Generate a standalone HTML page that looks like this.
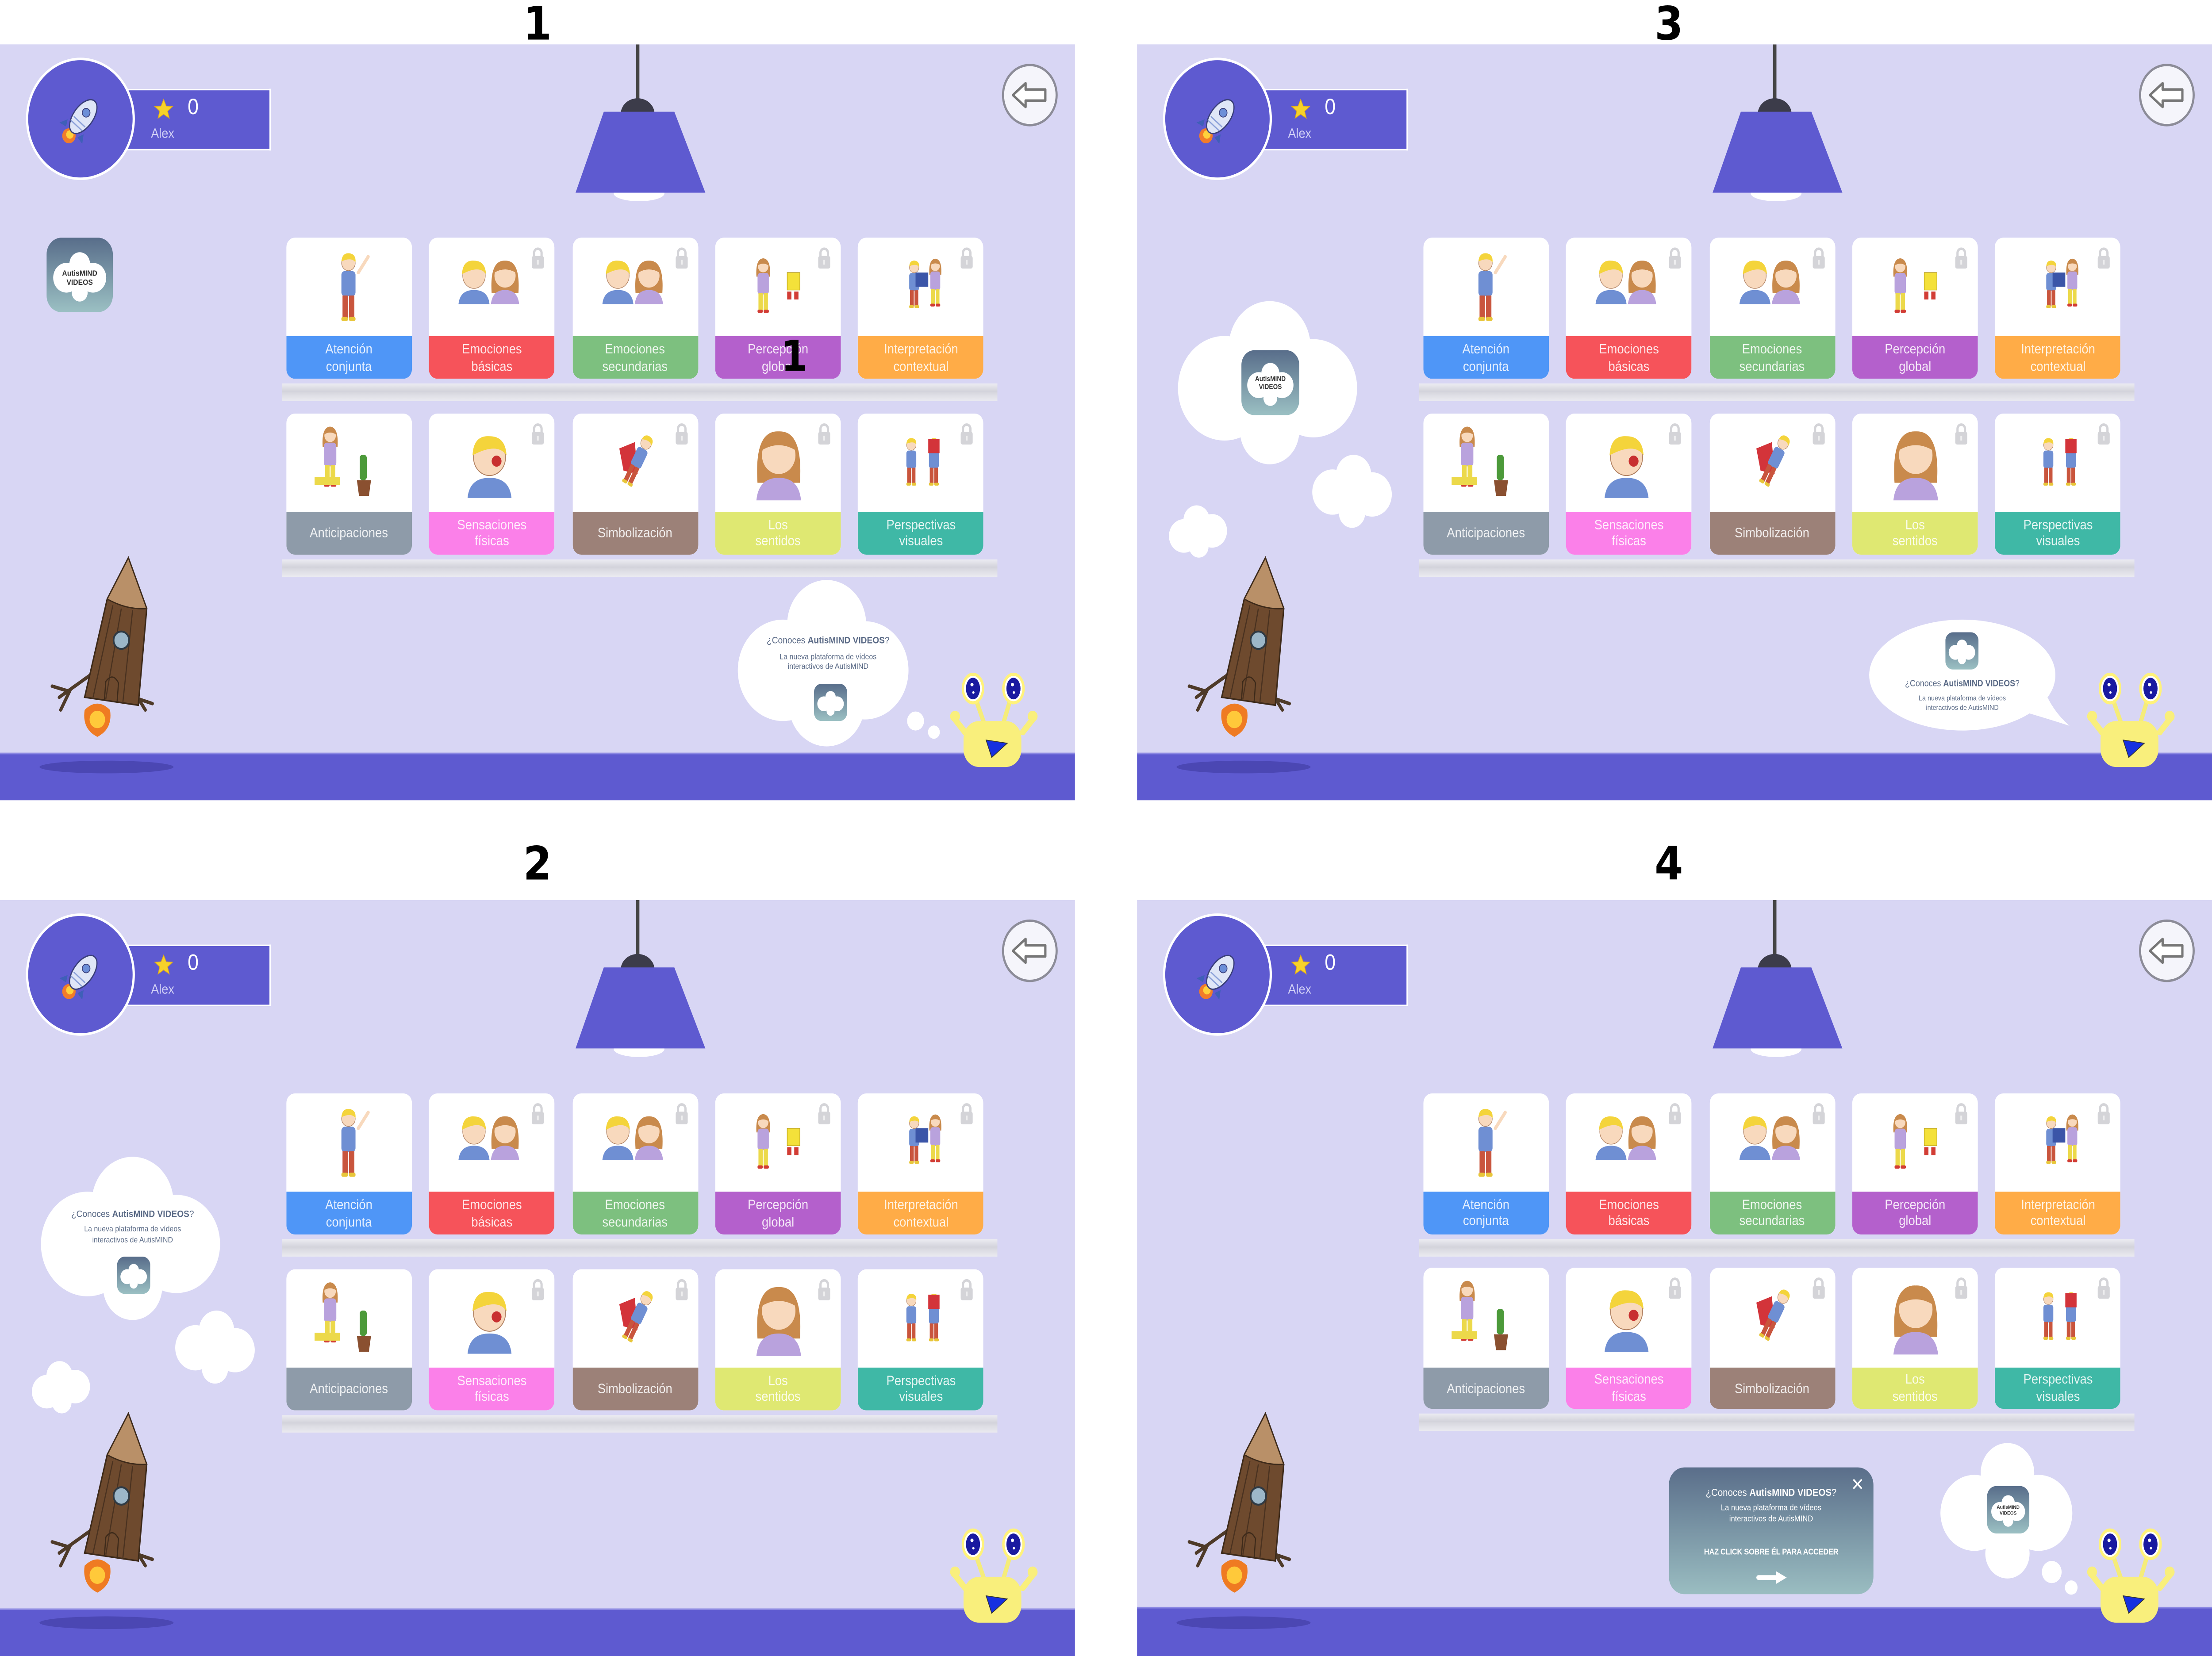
<!DOCTYPE html>
<html><head><meta charset="utf-8">
<style>
html,body{margin:0;padding:0;background:#fff}
body{width:100vw;height:100vh;overflow:hidden;position:relative}
#w{position:absolute;left:0;top:0;width:1568px;height:1045px;transform:scale(3.58291);transform-origin:0 0;font-family:"Liberation Sans",sans-serif}
.ttl{position:absolute;width:100px;text-align:center;font:bold 29px/32px "DejaVu Sans","Liberation Sans",sans-serif;color:#000}
.p{position:absolute;width:762px;height:477px;background:#d8d6f4;overflow:hidden}
.fl{position:absolute;left:0;top:446.5px;width:762px;height:31px;background:#5e5ad0;border-top:1.5px solid #8b88e2}
.sh{position:absolute;left:28px;top:452px;width:95px;height:8px;border-radius:50%;background:#4b47b3}
.bar{position:absolute;left:84px;top:28px;width:108px;height:39px;box-sizing:border-box;background:#5e5ad0;border:1.5px solid #fff;border-left:none}
.bar svg{position:absolute;left:25px;top:5px;width:14px;height:14px}
.n0{position:absolute;left:49px;top:1px;color:#fff;font-size:14px;line-height:18px}
.nm{position:absolute;left:23px;top:22px;color:#d2d1f6;font-size:8.5px;line-height:10px}
.av{position:absolute;left:20px;top:10px;width:74px;height:74px;border-radius:50%;background:#5e5ad0;box-shadow:0 0 0 1.6px #fff}
.ab{position:absolute;overflow:visible}
.c{position:absolute;width:89px;height:89px;background:#fff;border-radius:6px;overflow:hidden}
.c .l{position:absolute;left:0;right:0;bottom:0;height:26.6px;display:flex;align-items:center;justify-content:center;text-align:center;color:rgba(255,255,255,.86);font:8.6px/10.5px "Liberation Sans",sans-serif}
.c .im{position:absolute;left:0;top:0;width:89px;height:62px}
.c .lk{position:absolute;left:72px;top:5px;width:10.5px;height:15px}
.sf{position:absolute;left:200.4px;width:506.6px;height:11px;background:linear-gradient(#ececf2,#d3d3db 45%,#dcdce3 62%,#eaeaf0)}
.t{position:absolute;width:160px;text-align:center;white-space:nowrap;color:#5a6a86}
.pop{position:absolute;left:377px;top:358px;width:145px;height:80.6px;border-radius:11px;background:linear-gradient(#5a6e8a,#9abdc1)}
.pop .t{color:#fff;left:-7.5px}
</style></head><body>
<svg width="0" height="0" style="position:absolute">
<defs>
<linearGradient id="ig" x1="0" y1="0" x2="0" y2="1"><stop offset="0" stop-color="#586d8a"/><stop offset="1" stop-color="#9bc0c3"/></linearGradient>
<symbol id="star" viewBox="0 0 20 20"><polygon points="10,1 12.6,7 19,7.4 14,11.6 15.7,18 10,14.4 4.3,18 6,11.6 1,7.4 7.4,7" fill="#f6d22a" stroke="#e0a81a" stroke-width=".6"/></symbol>
<symbol id="ic" viewBox="0 0 40 40"><rect x="0" y="0" width="40" height="40" rx="9" fill="url(#ig)"/><g fill="#fff"><circle cx="20" cy="14" r="6.2"/><circle cx="12" cy="21.5" r="8"/><circle cx="28" cy="21.5" r="8"/><circle cx="20" cy="29.5" r="4.8"/><rect x="12" y="15" width="16" height="13"/></g></symbol>
<symbol id="lk" viewBox="0 0 10.5 15"><path d="M2.6 7 V4.6 A2.65 2.65 0 0 1 7.9 4.6 V7" stroke="#d4d4d8" stroke-width="1.6" fill="none"/><rect x="1" y="6.5" width="8.5" height="8" rx="1.3" fill="#d4d4d8"/><rect x="4.6" y="9" width="1.3" height="3" fill="#fff" opacity=".6"/></symbol>
<symbol id="kid" viewBox="0 0 20 50"><circle cx="10" cy="9" r="4.8" fill="#f8d9bd" stroke="#b08060" stroke-width=".4"/><path d="M5 8 Q5.5 2.5 10.5 2.8 Q15.5 3.3 15 8.5 Q12 5 5 8Z" fill="#f4d43b"/><rect x="5" y="14" width="10" height="16" rx="2.5" fill="#6f8fd3"/><rect x="5.8" y="29.5" width="3.8" height="14" fill="#c9553d"/><rect x="10.4" y="29.5" width="3.8" height="14" fill="#c9553d"/><rect x="5" y="43" width="4.6" height="2.6" rx="1" fill="#e8c63a"/><rect x="10.4" y="43" width="4.6" height="2.6" rx="1" fill="#e8c63a"/></symbol>
<symbol id="girl" viewBox="0 0 20 50"><path d="M4 17 Q3 3 10 2.5 Q17 3 16 17Z" fill="#c98a4c"/><circle cx="10" cy="9" r="4.6" fill="#f8d9bd"/><path d="M5.5 8 Q7 3.5 10 3.5 Q14 3.5 14.5 8 Q10 5.5 5.5 8Z" fill="#c98a4c"/><rect x="5" y="14" width="10" height="17" rx="2.5" fill="#b9a2dd"/><rect x="5.8" y="30" width="3.8" height="14" fill="#ecd94a"/><rect x="10.4" y="30" width="3.8" height="14" fill="#ecd94a"/><rect x="5" y="43" width="4.6" height="2.6" rx="1" fill="#d23d35"/><rect x="10.4" y="43" width="4.6" height="2.6" rx="1" fill="#d23d35"/></symbol>
<symbol id="bb" viewBox="0 0 24 30"><path d="M1 30 Q2 21 12 21 Q22 21 23 30Z" fill="#6f8fd3"/><circle cx="12" cy="12" r="8" fill="#f8d9bd" stroke="#b08060" stroke-width=".4"/><path d="M3.5 11 Q4 2 12 2.5 Q20 2.5 20.5 11 Q16 5 3.5 11Z" fill="#f4d43b"/></symbol>
<symbol id="bg" viewBox="0 0 24 30"><path d="M2.5 23 Q1 2 12 2.5 Q23 2 21.5 23Z" fill="#c98a4c"/><path d="M2 30 Q3 21 12 21 Q21 21 22 30Z" fill="#b9a2dd"/><circle cx="12" cy="12" r="7.5" fill="#f8d9bd"/><path d="M4.5 10 Q6 3.5 12 3.5 Q18 3.5 19.5 10 Q12 6 4.5 10Z" fill="#c98a4c"/></symbol>
<symbol id="i1" viewBox="0 0 89 62"><use href="#kid" x="34" y="6" width="20" height="52"/><path d="M51 22 L58 12" stroke="#f8d9bd" stroke-width="2.2" stroke-linecap="round"/></symbol>
<symbol id="i2" viewBox="0 0 89 62"><use href="#bb" x="20" y="12" width="24" height="30"/><use href="#bg" x="42" y="12" width="24" height="30"/></symbol>
<symbol id="i4" viewBox="0 0 89 62"><use href="#girl" x="26" y="10" width="16" height="42"/><rect x="51" y="22" width="9" height="11" fill="#f4e13a" stroke="#b9a020" stroke-width=".4"/><rect x="51" y="34" width="3" height="5" fill="#d23d35"/><rect x="56" y="34" width="3" height="5" fill="#d23d35"/></symbol>
<symbol id="i5" viewBox="0 0 89 62"><use href="#kid" x="33" y="12" width="14" height="36"/><use href="#girl" x="48" y="10" width="14" height="38"/><rect x="41" y="22" width="9" height="9" fill="#3b55a8"/></symbol>
<symbol id="i6" viewBox="0 0 89 62"><use href="#girl" x="22" y="6" width="18" height="44"/><rect x="20" y="40" width="18" height="5" fill="#ecd94a"/><rect x="52" y="26" width="5" height="16" rx="2" fill="#4c9a3a"/><path d="M50 42 H60 L58.5 52 H51.5Z" fill="#8a5030"/></symbol>
<symbol id="i7" viewBox="0 0 89 62"><use href="#bb" x="26" y="10" width="34" height="44"/><circle cx="48" cy="30" r="3.5" fill="#c83030"/></symbol>
<symbol id="i8" viewBox="0 0 89 62"><path d="M33 22 L44 18 L46 38 L36 36Z" fill="#d3343a"/><g transform="rotate(28 46 30)"><use href="#kid" x="38" y="10" width="16" height="40"/></g></symbol>
<symbol id="i9" viewBox="0 0 89 62"><use href="#bg" x="26" y="6" width="38" height="50"/></symbol>
<symbol id="i10" viewBox="0 0 89 62"><use href="#kid" x="31" y="12" width="14" height="38"/><use href="#kid" x="47" y="12" width="14" height="38"/><rect x="50" y="16" width="8" height="9" fill="#d3343a"/></symbol>
<symbol id="arock" viewBox="0 0 36 34"><g transform="rotate(40 18 17)"><circle cx="18" cy="29" r="4.5" fill="#f27c2a"/><circle cx="18" cy="28" r="2.5" fill="#ffd13c"/><path d="M11 22 L8 27 L13 26Z M25 22 L28 27 L23 26Z" fill="#3f5fb8"/><ellipse cx="18" cy="14" rx="6.5" ry="12" fill="#dfe6f7" stroke="#3a3f7a" stroke-width=".8"/><circle cx="18" cy="11" r="2.6" fill="#6c8fd8" stroke="#3a3f7a" stroke-width=".5"/><path d="M13 18 H23 M13 21 H23" stroke="#8aa0d8" stroke-width=".8"/></g></symbol>
<symbol id="lamp" viewBox="0 0 110 100"><line x1="52" y1="0" x2="52" y2="36" stroke="#444" stroke-width="2.5"/><ellipse cx="53" cy="94" rx="18" ry="5" fill="#fff"/><path d="M40 44 A12 10 0 0 1 64 44 Z" fill="#3c3c4a"/><polygon points="28,42.5 78,42.5 100,93.6 8,93.6" fill="#5e5ad0"/></symbol>
<symbol id="back" viewBox="0 0 40 40"><circle cx="20" cy="20" r="19" fill="#f5f5fb" stroke="#8c8c98" stroke-width="1.5"/><path d="M8 20 L17 12.5 V16.5 H31 V23.5 H17 V27.5 Z" fill="#fff" stroke="#777" stroke-width="1.6" stroke-linejoin="round"/></symbol>
<symbol id="rocket" viewBox="0 0 85 125"><path d="M34 78 L12 92 M18 88 L7 85 M20 87 L13 100 M62 84 L73 100 M68 93 L78 96" stroke="#4e3a28" stroke-width="2.2" fill="none" stroke-linecap="round"/><path d="M30 100 Q39 92 48 100 Q50 112 39 117 Q28 112 30 100Z" fill="#ef7b22"/><circle cx="39" cy="106" r="5.5" fill="#ffc93a"/><path d="M61 4 L74 36 L68 97 L30 92 L46 30 Z" fill="#6e4a2e" stroke="#3d2a1a" stroke-width="1"/><path d="M61 4 L74 36 Q60 37 46 30 Z" fill="#b99068" stroke="#3d2a1a" stroke-width=".8"/><path d="M56 36 L45 93 M64 37 L57 96 M50 34 L36 92" stroke="#4a3220" stroke-width=".8"/><circle cx="56" cy="56" r="5.5" fill="#9cb7c9" stroke="#2f3a44" stroke-width="1.2"/><path d="M44 94 L45 82 Q50 76 54 83 L53 95" fill="none" stroke="#3d2a1a" stroke-width=".8"/></symbol>
<symbol id="mon" viewBox="0 0 70 70"><path d="M22 24 L29 42 M46 24 L40 42" stroke="#f5ec7a" stroke-width="3"/><path d="M14 44 L7 36 M55 44 L62 36" stroke="#f9ef7c" stroke-width="4" stroke-linecap="round"/><circle cx="7" cy="34" r="3.5" fill="#f9ef7c"/><circle cx="62" cy="34" r="3.5" fill="#f9ef7c"/><rect x="13" y="37" width="41" height="29" rx="11" fill="#f9ef7c"/><path d="M29 49 L44 51 L33 60Z" fill="#1630e0" stroke="#333" stroke-width=".5"/><ellipse cx="19.7" cy="16.5" rx="8" ry="10" fill="#fff27a"/><ellipse cx="48.4" cy="16.5" rx="8" ry="10" fill="#fff27a"/><ellipse cx="19.7" cy="16.5" rx="6.3" ry="8" fill="#fff"/><ellipse cx="48.4" cy="16.5" rx="6.3" ry="8" fill="#fff"/><ellipse cx="19.7" cy="16.5" rx="5" ry="6.8" fill="#1a1aa0"/><ellipse cx="48.4" cy="16.5" rx="5" ry="6.8" fill="#1a1aa0"/><circle cx="19" cy="14" r="1.1" fill="#fff"/><circle cx="47.7" cy="14" r="1.1" fill="#fff"/><circle cx="20" cy="19" r=".8" fill="#fff"/><circle cx="48.7" cy="19" r=".8" fill="#fff"/></symbol>
<symbol id="scl" viewBox="0 0 762 477"><g fill="#fff"><circle cx="62" cy="217" r="33"/><circle cx="125" cy="217" r="31"/><circle cx="94" cy="191" r="29"/><circle cx="94" cy="244" r="21"/><ellipse cx="94" cy="217" rx="45" ry="30"/><circle cx="138.5" cy="282.5" r="14.3"/><circle cx="153.5" cy="271.5" r="12.5"/><circle cx="166.6" cy="284" r="14"/><circle cx="152.4" cy="295.8" r="9.3"/><rect x="138" y="276" width="28" height="12"/><circle cx="33.2" cy="310.2" r="10.6"/><circle cx="42.2" cy="300.2" r="9.3"/><circle cx="53.2" cy="307" r="10.6"/><circle cx="43.8" cy="317" r="6.9"/><rect x="33" y="303" width="20" height="9"/></g></symbol>
</defs></svg>

<div id="w">
<div class="ttl" style="left:331px;top:-1px">1</div>
<div class="ttl" style="left:1133px;top:-1px">3</div>
<div class="ttl" style="left:331px;top:529px">2</div>
<div class="ttl" style="left:1133px;top:529px">4</div>

<!-- PANEL 1 -->
<div class="p" style="left:0;top:28px">
<div class="fl"></div><div class="sh"></div>
<div class="bar"><svg><use href="#star"/></svg><span class="n0">0</span><span class="nm">Alex</span></div>
<div class="av"><svg viewBox="0 0 36 34" style="position:absolute;left:18px;top:20px;width:38px;height:36px"><use href="#arock"/></svg></div>
<svg class="ab" style="left:710px;top:12px" width="40" height="40" viewBox="0 0 40 40"><use href="#back"/></svg>
<svg class="ab" style="left:400px;top:0" width="110" height="100" viewBox="0 0 110 100"><use href="#lamp"/></svg>
<div class="sf" style="top:214px"></div><div class="sf" style="top:324.5px"></div>
<div class="c" style="left:202.8px;top:122px"><svg class="im" viewBox="0 0 89 62"><use href="#i1"/></svg><div class="l" style="background:#4f96f7">Atención<br>conjunta</div></div>
<div class="c" style="left:304.2px;top:122px"><svg class="im" viewBox="0 0 89 62"><use href="#i2"/></svg><svg class="lk"><use href="#lk"/></svg><div class="l" style="background:#f6535a">Emociones<br>básicas</div></div>
<div class="c" style="left:405.6px;top:122px"><svg class="im" viewBox="0 0 89 62"><use href="#i2"/></svg><svg class="lk"><use href="#lk"/></svg><div class="l" style="background:#7dc07f">Emociones<br>secundarias</div></div>
<div class="c" style="left:507px;top:122px"><svg class="im" viewBox="0 0 89 62"><use href="#i4"/></svg><svg class="lk"><use href="#lk"/></svg><div class="l" style="background:#b460cc">Percepción<br>global</div></div>
<div class="c" style="left:608.4px;top:122px"><svg class="im" viewBox="0 0 89 62"><use href="#i5"/></svg><svg class="lk"><use href="#lk"/></svg><div class="l" style="background:#ffac47">Interpretación<br>contextual</div></div>
<div class="c" style="left:202.8px;top:232.6px"><svg class="im" viewBox="0 0 89 62"><use href="#i6"/></svg><div class="l" style="background:#8e9ba9">Anticipaciones</div></div>
<div class="c" style="left:304.2px;top:232.6px"><svg class="im" viewBox="0 0 89 62"><use href="#i7"/></svg><svg class="lk"><use href="#lk"/></svg><div class="l" style="background:#fb80e9">Sensaciones<br>físicas</div></div>
<div class="c" style="left:405.6px;top:232.6px"><svg class="im" viewBox="0 0 89 62"><use href="#i8"/></svg><svg class="lk"><use href="#lk"/></svg><div class="l" style="background:#9c8178">Simbolización</div></div>
<div class="c" style="left:507px;top:232.6px"><svg class="im" viewBox="0 0 89 62"><use href="#i9"/></svg><svg class="lk"><use href="#lk"/></svg><div class="l" style="background:#dfe872">Los<br>sentidos</div></div>
<div class="c" style="left:608.4px;top:232.6px"><svg class="im" viewBox="0 0 89 62"><use href="#i10"/></svg><svg class="lk"><use href="#lk"/></svg><div class="l" style="background:#3fb8a6">Perspectivas<br>visuales</div></div>
<svg class="ab" style="left:30px;top:320px" width="85" height="125" viewBox="0 0 85 125"><use href="#rocket"/></svg>
<svg class="ab" style="left:33px;top:122px" width="47" height="47" viewBox="0 0 40 40"><use href="#ic"/><text x="20" y="20.5" text-anchor="middle" font-family="Liberation Sans" font-weight="bold" font-size="4.2" fill="#333">AutisMIND</text><text x="20" y="25.3" text-anchor="middle" font-family="Liberation Sans" font-weight="bold" font-size="4.2" fill="#333">VIDEOS</text></svg>
<svg class="ab" style="left:0;top:0" width="762" height="477" viewBox="0 0 762 477"><g fill="#fff"><circle cx="555" cy="395" r="32"/><circle cx="613" cy="395" r="31"/><circle cx="586" cy="366" r="28"/><circle cx="586" cy="416" r="27"/><ellipse cx="585" cy="393" rx="45" ry="32"/><circle cx="649" cy="427" r="6"/><circle cx="662" cy="434" r="4.2"/></g><use href="#ic" x="577" y="403.5" width="23.5" height="23.5"/></svg>
<div class="t" style="left:507px;top:373.5px;font-size:6px;line-height:7px">¿Conoces <b>AutisMIND VIDEOS</b>?</div>
<div class="t" style="left:507px;top:383.5px;font-size:5px;line-height:6.5px">La nueva plataforma de vídeos<br>interactivos de AutisMIND</div>
<svg class="ab" style="left:670px;top:390px" width="70" height="70" viewBox="0 0 70 70"><use href="#mon"/></svg>
<div class="ttl" style="left:513px;top:183px;font-size:27px;line-height:30px">1</div>
</div>

<!-- PANEL 3 -->
<div class="p" style="left:806px;top:28px">
<div class="fl"></div><div class="sh"></div>
<div class="bar"><svg><use href="#star"/></svg><span class="n0">0</span><span class="nm">Alex</span></div>
<div class="av"><svg viewBox="0 0 36 34" style="position:absolute;left:18px;top:20px;width:38px;height:36px"><use href="#arock"/></svg></div>
<svg class="ab" style="left:710px;top:12px" width="40" height="40" viewBox="0 0 40 40"><use href="#back"/></svg>
<svg class="ab" style="left:400px;top:0" width="110" height="100" viewBox="0 0 110 100"><use href="#lamp"/></svg>
<div class="sf" style="top:214px"></div><div class="sf" style="top:324.5px"></div>
<div class="c" style="left:202.8px;top:122px"><svg class="im" viewBox="0 0 89 62"><use href="#i1"/></svg><div class="l" style="background:#4f96f7">Atención<br>conjunta</div></div>
<div class="c" style="left:304.2px;top:122px"><svg class="im" viewBox="0 0 89 62"><use href="#i2"/></svg><svg class="lk"><use href="#lk"/></svg><div class="l" style="background:#f6535a">Emociones<br>básicas</div></div>
<div class="c" style="left:405.6px;top:122px"><svg class="im" viewBox="0 0 89 62"><use href="#i2"/></svg><svg class="lk"><use href="#lk"/></svg><div class="l" style="background:#7dc07f">Emociones<br>secundarias</div></div>
<div class="c" style="left:507px;top:122px"><svg class="im" viewBox="0 0 89 62"><use href="#i4"/></svg><svg class="lk"><use href="#lk"/></svg><div class="l" style="background:#b460cc">Percepción<br>global</div></div>
<div class="c" style="left:608.4px;top:122px"><svg class="im" viewBox="0 0 89 62"><use href="#i5"/></svg><svg class="lk"><use href="#lk"/></svg><div class="l" style="background:#ffac47">Interpretación<br>contextual</div></div>
<div class="c" style="left:202.8px;top:232.6px"><svg class="im" viewBox="0 0 89 62"><use href="#i6"/></svg><div class="l" style="background:#8e9ba9">Anticipaciones</div></div>
<div class="c" style="left:304.2px;top:232.6px"><svg class="im" viewBox="0 0 89 62"><use href="#i7"/></svg><svg class="lk"><use href="#lk"/></svg><div class="l" style="background:#fb80e9">Sensaciones<br>físicas</div></div>
<div class="c" style="left:405.6px;top:232.6px"><svg class="im" viewBox="0 0 89 62"><use href="#i8"/></svg><svg class="lk"><use href="#lk"/></svg><div class="l" style="background:#9c8178">Simbolización</div></div>
<div class="c" style="left:507px;top:232.6px"><svg class="im" viewBox="0 0 89 62"><use href="#i9"/></svg><svg class="lk"><use href="#lk"/></svg><div class="l" style="background:#dfe872">Los<br>sentidos</div></div>
<div class="c" style="left:608.4px;top:232.6px"><svg class="im" viewBox="0 0 89 62"><use href="#i10"/></svg><svg class="lk"><use href="#lk"/></svg><div class="l" style="background:#3fb8a6">Perspectivas<br>visuales</div></div>
<svg class="ab" style="left:30px;top:320px" width="85" height="125" viewBox="0 0 85 125"><use href="#rocket"/></svg>
<svg class="ab" style="left:0;top:0" width="762" height="477" viewBox="0 0 762 477"><use href="#scl" x="0" y="0" width="762" height="477"/><use href="#ic" x="73" y="193" width="43" height="41"/><text x="94.5" y="212.5" text-anchor="middle" font-family="Liberation Sans" font-weight="bold" font-size="4.3" fill="#333">AutisMIND</text><text x="94.5" y="217.5" text-anchor="middle" font-family="Liberation Sans" font-weight="bold" font-size="4.3" fill="#333">VIDEOS</text><ellipse cx="585" cy="398" rx="66" ry="35" fill="#fff"/><path d="M624 420 Q640 424 661 430 Q648 420 642 405 Z" fill="#fff"/><use href="#ic" x="573" y="371" width="23.5" height="23.5"/></svg>
<div class="t" style="left:505px;top:401.3px;font-size:5.6px;line-height:6.6px">¿Conoces <b>AutisMIND VIDEOS</b>?</div>
<div class="t" style="left:505px;top:410px;font-size:4.5px;line-height:5.6px">La nueva plataforma de vídeos<br>interactivos de AutisMIND</div>
<svg class="ab" style="left:670px;top:390px" width="70" height="70" viewBox="0 0 70 70"><use href="#mon"/></svg>
</div>

<!-- PANEL 2 -->
<div class="p" style="left:0;top:568px">
<div class="fl"></div><div class="sh"></div>
<div class="bar"><svg><use href="#star"/></svg><span class="n0">0</span><span class="nm">Alex</span></div>
<div class="av"><svg viewBox="0 0 36 34" style="position:absolute;left:18px;top:20px;width:38px;height:36px"><use href="#arock"/></svg></div>
<svg class="ab" style="left:710px;top:12px" width="40" height="40" viewBox="0 0 40 40"><use href="#back"/></svg>
<svg class="ab" style="left:400px;top:0" width="110" height="100" viewBox="0 0 110 100"><use href="#lamp"/></svg>
<div class="sf" style="top:214px"></div><div class="sf" style="top:324.5px"></div>
<div class="c" style="left:202.8px;top:122px"><svg class="im" viewBox="0 0 89 62"><use href="#i1"/></svg><div class="l" style="background:#4f96f7">Atención<br>conjunta</div></div>
<div class="c" style="left:304.2px;top:122px"><svg class="im" viewBox="0 0 89 62"><use href="#i2"/></svg><svg class="lk"><use href="#lk"/></svg><div class="l" style="background:#f6535a">Emociones<br>básicas</div></div>
<div class="c" style="left:405.6px;top:122px"><svg class="im" viewBox="0 0 89 62"><use href="#i2"/></svg><svg class="lk"><use href="#lk"/></svg><div class="l" style="background:#7dc07f">Emociones<br>secundarias</div></div>
<div class="c" style="left:507px;top:122px"><svg class="im" viewBox="0 0 89 62"><use href="#i4"/></svg><svg class="lk"><use href="#lk"/></svg><div class="l" style="background:#b460cc">Percepción<br>global</div></div>
<div class="c" style="left:608.4px;top:122px"><svg class="im" viewBox="0 0 89 62"><use href="#i5"/></svg><svg class="lk"><use href="#lk"/></svg><div class="l" style="background:#ffac47">Interpretación<br>contextual</div></div>
<div class="c" style="left:202.8px;top:232.6px"><svg class="im" viewBox="0 0 89 62"><use href="#i6"/></svg><div class="l" style="background:#8e9ba9">Anticipaciones</div></div>
<div class="c" style="left:304.2px;top:232.6px"><svg class="im" viewBox="0 0 89 62"><use href="#i7"/></svg><svg class="lk"><use href="#lk"/></svg><div class="l" style="background:#fb80e9">Sensaciones<br>físicas</div></div>
<div class="c" style="left:405.6px;top:232.6px"><svg class="im" viewBox="0 0 89 62"><use href="#i8"/></svg><svg class="lk"><use href="#lk"/></svg><div class="l" style="background:#9c8178">Simbolización</div></div>
<div class="c" style="left:507px;top:232.6px"><svg class="im" viewBox="0 0 89 62"><use href="#i9"/></svg><svg class="lk"><use href="#lk"/></svg><div class="l" style="background:#dfe872">Los<br>sentidos</div></div>
<div class="c" style="left:608.4px;top:232.6px"><svg class="im" viewBox="0 0 89 62"><use href="#i10"/></svg><svg class="lk"><use href="#lk"/></svg><div class="l" style="background:#3fb8a6">Perspectivas<br>visuales</div></div>
<svg class="ab" style="left:30px;top:320px" width="85" height="125" viewBox="0 0 85 125"><use href="#rocket"/></svg>
<svg class="ab" style="left:0;top:0" width="762" height="477" viewBox="0 0 762 477"><use href="#scl" x="0" y="0" width="762" height="477"/><use href="#ic" x="83" y="225" width="23.5" height="23.5"/></svg>
<div class="t" style="left:14px;top:195.5px;font-size:6px;line-height:7px">¿Conoces <b>AutisMIND VIDEOS</b>?</div>
<div class="t" style="left:14px;top:204.5px;font-size:5px;line-height:7px">La nueva plataforma de vídeos<br>interactivos de AutisMIND</div>
<svg class="ab" style="left:670px;top:390px" width="70" height="70" viewBox="0 0 70 70"><use href="#mon"/></svg>
</div>

<!-- PANEL 4 -->
<div class="p" style="left:806px;top:567.5px">
<div class="fl"></div><div class="sh"></div>
<div class="bar"><svg><use href="#star"/></svg><span class="n0">0</span><span class="nm">Alex</span></div>
<div class="av"><svg viewBox="0 0 36 34" style="position:absolute;left:18px;top:20px;width:38px;height:36px"><use href="#arock"/></svg></div>
<svg class="ab" style="left:710px;top:12px" width="40" height="40" viewBox="0 0 40 40"><use href="#back"/></svg>
<svg class="ab" style="left:400px;top:0" width="110" height="100" viewBox="0 0 110 100"><use href="#lamp"/></svg>
<div class="sf" style="top:214px"></div><div class="sf" style="top:324.5px"></div>
<div class="c" style="left:202.8px;top:122px"><svg class="im" viewBox="0 0 89 62"><use href="#i1"/></svg><div class="l" style="background:#4f96f7">Atención<br>conjunta</div></div>
<div class="c" style="left:304.2px;top:122px"><svg class="im" viewBox="0 0 89 62"><use href="#i2"/></svg><svg class="lk"><use href="#lk"/></svg><div class="l" style="background:#f6535a">Emociones<br>básicas</div></div>
<div class="c" style="left:405.6px;top:122px"><svg class="im" viewBox="0 0 89 62"><use href="#i2"/></svg><svg class="lk"><use href="#lk"/></svg><div class="l" style="background:#7dc07f">Emociones<br>secundarias</div></div>
<div class="c" style="left:507px;top:122px"><svg class="im" viewBox="0 0 89 62"><use href="#i4"/></svg><svg class="lk"><use href="#lk"/></svg><div class="l" style="background:#b460cc">Percepción<br>global</div></div>
<div class="c" style="left:608.4px;top:122px"><svg class="im" viewBox="0 0 89 62"><use href="#i5"/></svg><svg class="lk"><use href="#lk"/></svg><div class="l" style="background:#ffac47">Interpretación<br>contextual</div></div>
<div class="c" style="left:202.8px;top:232.6px"><svg class="im" viewBox="0 0 89 62"><use href="#i6"/></svg><div class="l" style="background:#8e9ba9">Anticipaciones</div></div>
<div class="c" style="left:304.2px;top:232.6px"><svg class="im" viewBox="0 0 89 62"><use href="#i7"/></svg><svg class="lk"><use href="#lk"/></svg><div class="l" style="background:#fb80e9">Sensaciones<br>físicas</div></div>
<div class="c" style="left:405.6px;top:232.6px"><svg class="im" viewBox="0 0 89 62"><use href="#i8"/></svg><svg class="lk"><use href="#lk"/></svg><div class="l" style="background:#9c8178">Simbolización</div></div>
<div class="c" style="left:507px;top:232.6px"><svg class="im" viewBox="0 0 89 62"><use href="#i9"/></svg><svg class="lk"><use href="#lk"/></svg><div class="l" style="background:#dfe872">Los<br>sentidos</div></div>
<div class="c" style="left:608.4px;top:232.6px"><svg class="im" viewBox="0 0 89 62"><use href="#i10"/></svg><svg class="lk"><use href="#lk"/></svg><div class="l" style="background:#3fb8a6">Perspectivas<br>visuales</div></div>
<svg class="ab" style="left:30px;top:320px" width="85" height="125" viewBox="0 0 85 125"><use href="#rocket"/></svg>
<div class="pop">
<div class="t" style="top:13px;font-size:6.4px;line-height:7.5px">¿Conoces <b>AutisMIND VIDEOS</b>?</div>
<div class="t" style="top:23.5px;font-size:5.2px;line-height:7px">La nueva plataforma de vídeos<br>interactivos de AutisMIND</div>
<div class="t" style="top:51.5px;font-size:5.2px;line-height:6px;font-weight:bold;letter-spacing:-.1px">HAZ CLICK SOBRE ÉL PARA ACCEDER</div>
<svg class="ab" style="left:62px;top:65px" width="22" height="9" viewBox="0 0 22 9"><rect x="0" y="3" width="15" height="3" rx="1.5" fill="#fff"/><path d="M14 0.5 L21.5 4.5 L14 8.5Z" fill="#fff"/></svg>
<svg class="ab" style="left:129.5px;top:7.7px" width="7.5" height="7" viewBox="0 0 7.5 7"><path d="M.8 .6 L6.7 6.4 M6.7 .6 L.8 6.4" stroke="#fff" stroke-width="1.1"/></svg>
</div>
<svg class="ab" style="left:0;top:0" width="762" height="477" viewBox="0 0 762 477"><g fill="#fff"><circle cx="593.5" cy="386.7" r="24"/><circle cx="639" cy="386.7" r="24"/><circle cx="617" cy="361.6" r="19"/><circle cx="617" cy="412.4" r="15.7"/><ellipse cx="616" cy="387" rx="30" ry="24"/><circle cx="648.4" cy="424" r="7"/><circle cx="662.2" cy="433.8" r="4.5"/></g><use href="#ic" x="602" y="369.7" width="31" height="30"/><text x="617.5" y="384" text-anchor="middle" font-family="Liberation Sans" font-weight="bold" font-size="3.2" fill="#333">AutisMIND</text><text x="617.5" y="387.8" text-anchor="middle" font-family="Liberation Sans" font-weight="bold" font-size="3.2" fill="#333">VIDEOS</text></svg>
<svg class="ab" style="left:670px;top:390px" width="70" height="70" viewBox="0 0 70 70"><use href="#mon"/></svg>
</div>
</div>
<script>
(function(){
  function fit(){
    var vw=document.documentElement.clientWidth||window.innerWidth;
    var vh=document.documentElement.clientHeight||window.innerHeight;
    if(!vw||!vh)return;
    document.getElementById('w').style.transform='scale('+(vw/1568)+','+(vh/1045)+')';
  }
  fit();
  window.addEventListener('resize',fit);
})();
</script>
</body></html>
